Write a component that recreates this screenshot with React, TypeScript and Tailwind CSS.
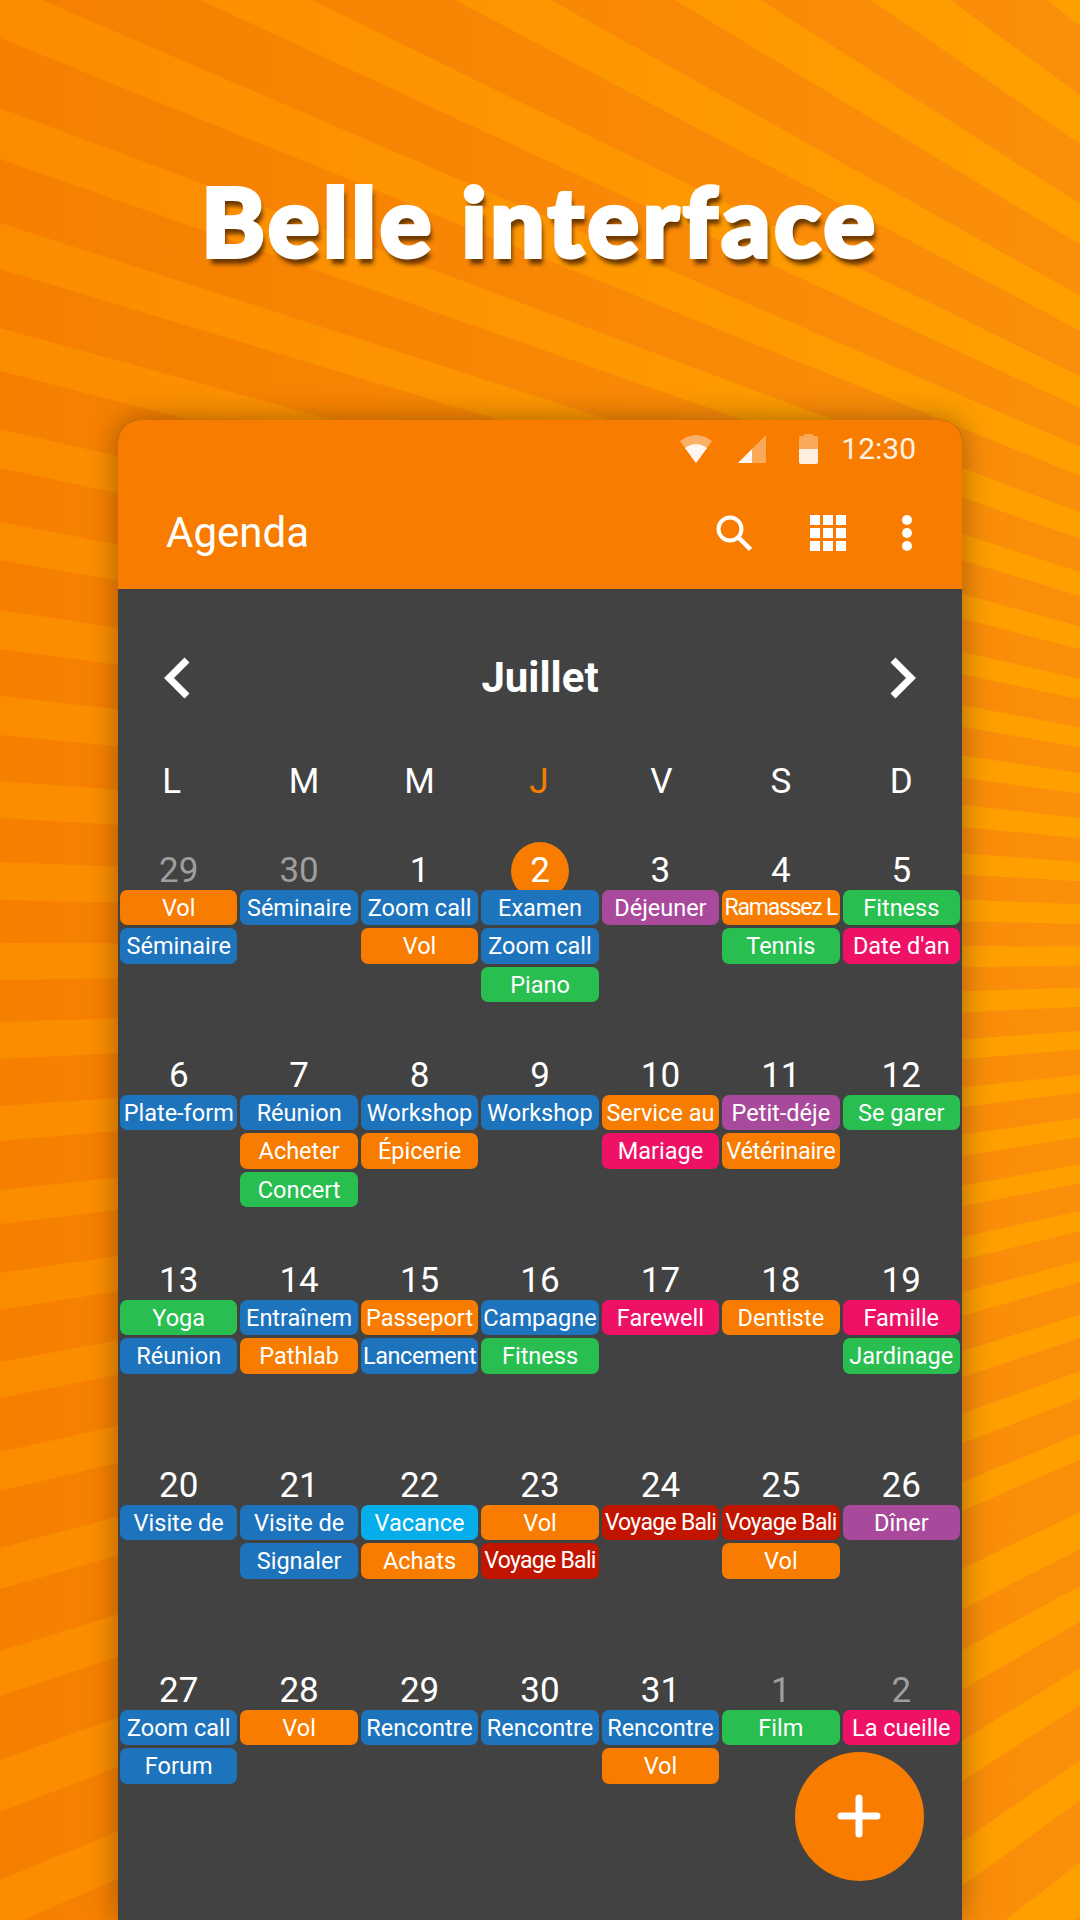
type Tone = "o" | "b" | "g" | "k" | "p" | "r" | "c";
type Ev = { t: string; c: Tone; cls?: string };
type Day = { d: number; muted?: boolean; today?: boolean; ev: Ev[] };

const tones: Record<Tone, string> = {
  o: "bg-[#f77c00]",
  b: "bg-[#1e73bd]",
  g: "bg-[#28be50]",
  k: "bg-[#ee1166]",
  p: "bg-[#a8499b]",
  r: "bg-[#c21500]",
  c: "bg-[#05aeeb]",
};

const rays = [
  [-958, -827], [-694, -600], [-485, -407], [-308, -241], [-153, -93], [-18, 38],
  [108, 159], [223, 269], [328, 371], [429, 468], [522, 560], [610, 649], [696, 735],
  [781, 818], [862, 900], [943, 980], [1022, 1059], [1106, 1141], [1190, 1224],
  [1273, 1310], [1362, 1398], [1452, 1491], [1548, 1589], [1651, 1696], [1760, 1812],
  [1880, 1930], [2031, 2102], [2173, 2242], [2331, 2402], [2508, 2585], [2704, 2808],
];

const bali = "text-[23px] tracking-[-0.7px]";

const weeks: Day[][] = [
  [
    { d: 29, muted: true, ev: [{ t: "Vol", c: "o" }, { t: "Séminaire", c: "b" }] },
    { d: 30, muted: true, ev: [{ t: "Séminaire", c: "b" }] },
    { d: 1, ev: [{ t: "Zoom call", c: "b" }, { t: "Vol", c: "o" }] },
    { d: 2, today: true, ev: [{ t: "Examen", c: "b" }, { t: "Zoom call", c: "b" }, { t: "Piano", c: "g" }] },
    { d: 3, ev: [{ t: "Déjeuner", c: "p" }] },
    { d: 4, ev: [{ t: "Ramassez L", c: "o", cls: "text-[23px] tracking-[-1.2px]" }, { t: "Tennis", c: "g" }] },
    { d: 5, ev: [{ t: "Fitness", c: "g" }, { t: "Date d'an", c: "k" }] },
  ],
  [
    { d: 6, ev: [{ t: "Plate-form", c: "b" }] },
    { d: 7, ev: [{ t: "Réunion", c: "b" }, { t: "Acheter", c: "o" }, { t: "Concert", c: "g" }] },
    { d: 8, ev: [{ t: "Workshop", c: "b" }, { t: "Épicerie", c: "o" }] },
    { d: 9, ev: [{ t: "Workshop", c: "b" }] },
    { d: 10, ev: [{ t: "Service au", c: "o" }, { t: "Mariage", c: "k" }] },
    { d: 11, ev: [{ t: "Petit-déje", c: "p" }, { t: "Vétérinaire", c: "o", cls: "text-[23.5px] tracking-[-0.3px]" }] },
    { d: 12, ev: [{ t: "Se garer", c: "g" }] },
  ],
  [
    { d: 13, ev: [{ t: "Yoga", c: "g" }, { t: "Réunion", c: "b" }] },
    { d: 14, ev: [{ t: "Entraînem", c: "b" }, { t: "Pathlab", c: "o" }] },
    { d: 15, ev: [{ t: "Passeport", c: "o" }, { t: "Lancement", c: "b", cls: "text-[23.5px] tracking-[-0.4px]" }] },
    { d: 16, ev: [{ t: "Campagne", c: "b" }, { t: "Fitness", c: "g" }] },
    { d: 17, ev: [{ t: "Farewell", c: "k" }] },
    { d: 18, ev: [{ t: "Dentiste", c: "o" }] },
    { d: 19, ev: [{ t: "Famille", c: "k" }, { t: "Jardinage", c: "g" }] },
  ],
  [
    { d: 20, ev: [{ t: "Visite de", c: "b" }] },
    { d: 21, ev: [{ t: "Visite de", c: "b" }, { t: "Signaler", c: "b" }] },
    { d: 22, ev: [{ t: "Vacance", c: "c" }, { t: "Achats", c: "o" }] },
    { d: 23, ev: [{ t: "Vol", c: "o" }, { t: "Voyage Bali", c: "r", cls: bali }] },
    { d: 24, ev: [{ t: "Voyage Bali", c: "r", cls: bali }] },
    { d: 25, ev: [{ t: "Voyage Bali", c: "r", cls: bali }, { t: "Vol", c: "o" }] },
    { d: 26, ev: [{ t: "Dîner", c: "p" }] },
  ],
  [
    { d: 27, ev: [{ t: "Zoom call", c: "b" }, { t: "Forum", c: "b" }] },
    { d: 28, ev: [{ t: "Vol", c: "o" }] },
    { d: 29, ev: [{ t: "Rencontre", c: "b" }] },
    { d: 30, ev: [{ t: "Rencontre", c: "b" }] },
    { d: 31, ev: [{ t: "Rencontre", c: "b" }, { t: "Vol", c: "o" }] },
    { d: 1, muted: true, ev: [{ t: "Film", c: "g" }] },
    { d: 2, muted: true, ev: [{ t: "La cueille", c: "k" }] },
  ],
];

const Background = () => (
  <svg className="absolute inset-0" width="1080" height="1920" viewBox="0 0 1080 1920">
    <defs>
      <linearGradient id="dark" x1="0" y1="0" x2="1" y2="0">
        <stop offset="0" stopColor="#f67f00" />
        <stop offset="1" stopColor="#fa8f0a" />
      </linearGradient>
      <linearGradient id="light" gradientUnits="userSpaceOnUse" x1="0" y1="0" x2="1080" y2="0">
        <stop offset="0" stopColor="#fb8c00" />
        <stop offset="1" stopColor="#ffa000" />
      </linearGradient>
    </defs>
    <rect width="1080" height="1920" fill="url(#dark)" />
    {rays.map(([a, b]) => (
      <polygon key={a} points={`2250,950 0,${a} 0,${b}`} fill="url(#light)" />
    ))}
  </svg>
);

const Chevron = ({ right }: { right?: boolean }) => (
  <svg width="26" height="42" viewBox="0 0 26 42" fill="none" stroke="white" strokeWidth="7">
    <polyline points={right ? "3,3 21,21 3,39" : "23,3 5,21 23,39"} />
  </svg>
);

const DayCell = ({ day }: { day: Day }) => (
  <div className="flex flex-col">
    <div className="relative h-[50px] pt-[10px] text-center text-[35px] leading-[41px]">
      {day.today && (
        <span className="absolute left-1/2 top-[2px] h-[58px] w-[58px] -translate-x-1/2 rounded-full bg-[#f77c00]" />
      )}
      <span className={`relative ${day.muted ? "text-[#9e9e9e]" : "text-white"}`}>{day.d}</span>
    </div>
    <div className="relative flex flex-col gap-[3px]">
      {day.ev.map((e) => (
        <div
          key={e.t}
          className={`h-[35.4px] overflow-hidden whitespace-nowrap rounded-[7px] text-center leading-[36px] text-white ${
            e.cls ?? "text-[23.5px]"
          } ${tones[e.c]}`}
        >
          {e.t}
        </div>
      ))}
    </div>
  </div>
);

export default function App() {
  return (
    <div className="relative h-[1920px] w-[1080px] overflow-hidden font-['Roboto',sans-serif]">
      <Background />
      <div className="relative flex h-[420px] justify-center pt-[160px]">
        <h1 className="font-['Lato',sans-serif] text-[96px] font-black leading-[120px] tracking-[3.8px] text-white [-webkit-text-stroke:4px_white] [text-shadow:3px_7px_4px_rgba(80,40,0,0.85)]">
          Belle interface
        </h1>
      </div>
      <div className="relative ml-[118px] h-[1500px] w-[844px] overflow-hidden rounded-t-[22px] bg-[#424242] shadow-[0_0_30px_rgba(0,0,0,0.35)]">
        <header className="h-[169px] bg-[#f77c00] text-white">
          <div className="flex h-[57px] items-center justify-end pr-[46px] pt-[1px]">
            <svg width="32" height="28" viewBox="0 0 32 28">
              <path d="M16 28 L0 6 Q16 -6 32 6 Z" fill="white" fillOpacity="0.4" />
              <path d="M16 28 L5 13 Q16 5 27 13 Z" fill="white" fillOpacity="0.9" />
            </svg>
            <svg className="ml-[26px]" width="28" height="28" viewBox="0 0 28 28">
              <path d="M0 28 L28 0 V28 Z" fill="white" fillOpacity="0.35" />
              <path d="M0 28 L14 14 V28 Z" fill="white" fillOpacity="0.9" />
            </svg>
            <svg className="ml-[33px]" width="19" height="30" viewBox="0 0 19 30">
              <path d="M5 2 V0 H14 V2 H17 Q19 2 19 4 V15 H0 V4 Q0 2 2 2 Z" fill="white" fillOpacity="0.35" />
              <path d="M0 15 H19 V28 Q19 30 17 30 H2 Q0 30 0 28 Z" fill="white" fillOpacity="0.88" />
            </svg>
            <span className="ml-[23px] text-[30px] leading-none text-white/90">12:30</span>
          </div>
          <div className="flex h-[112px] items-center pl-[48px] pr-[50px]">
            <span className="flex-1 text-[42px] leading-none">Agenda</span>
            <svg width="36" height="36" viewBox="0 0 36 36" fill="none" stroke="white">
              <circle cx="14" cy="14" r="11.5" strokeWidth="4" />
              <line x1="22" y1="22" x2="34.5" y2="34.5" strokeWidth="4.5" />
            </svg>
            <div className="ml-[58px] grid grid-cols-3 gap-[3px]">
              {[0, 1, 2, 3, 4, 5, 6, 7, 8].map((i) => (
                <span key={i} className="h-[10px] w-[10px] bg-white" />
              ))}
            </div>
            <div className="ml-[56px] flex flex-col gap-[3.5px]">
              {[0, 1, 2].map((i) => (
                <span key={i} className="h-[9.5px] w-[10px] rounded-full bg-white" />
              ))}
            </div>
          </div>
        </header>

        <div className="mt-[68px] flex h-[42px] items-center justify-between pl-[46px] pr-[46px] text-white">
          <Chevron />
          <span className="text-[42px] font-bold leading-none">Juillet</span>
          <Chevron right />
        </div>

        <div className="mt-[58px] grid h-[50px] grid-cols-7 gap-[3px] px-[2px] text-center text-[35px] leading-[50px] text-white">
          <span className="pr-[14px]">L</span>
          <span className="pl-[10px]">M</span>
          <span>M</span>
          <span className="pr-[2px] text-[#f77c00]">J</span>
          <span className="pl-[2px]">V</span>
          <span>S</span>
          <span>D</span>
        </div>

        <div className="mt-[33px] px-[2px]">
          {weeks.map((w) => (
            <div key={w[0].d} className="grid h-[205px] grid-cols-7 gap-x-[3px]">
              {w.map((day) => (
                <DayCell key={`${day.d}${day.muted}`} day={day} />
              ))}
            </div>
          ))}
        </div>

        <button className="absolute left-[676.5px] top-[1331.5px] flex h-[129px] w-[129px] items-center justify-center rounded-full bg-[#f77c00]">
          <svg width="44" height="44" viewBox="0 0 44 44" stroke="white" strokeWidth="7" strokeLinecap="round">
            <line x1="22" y1="4" x2="22" y2="40" />
            <line x1="4" y1="22" x2="40" y2="22" />
          </svg>
        </button>
      </div>
    </div>
  );
}
